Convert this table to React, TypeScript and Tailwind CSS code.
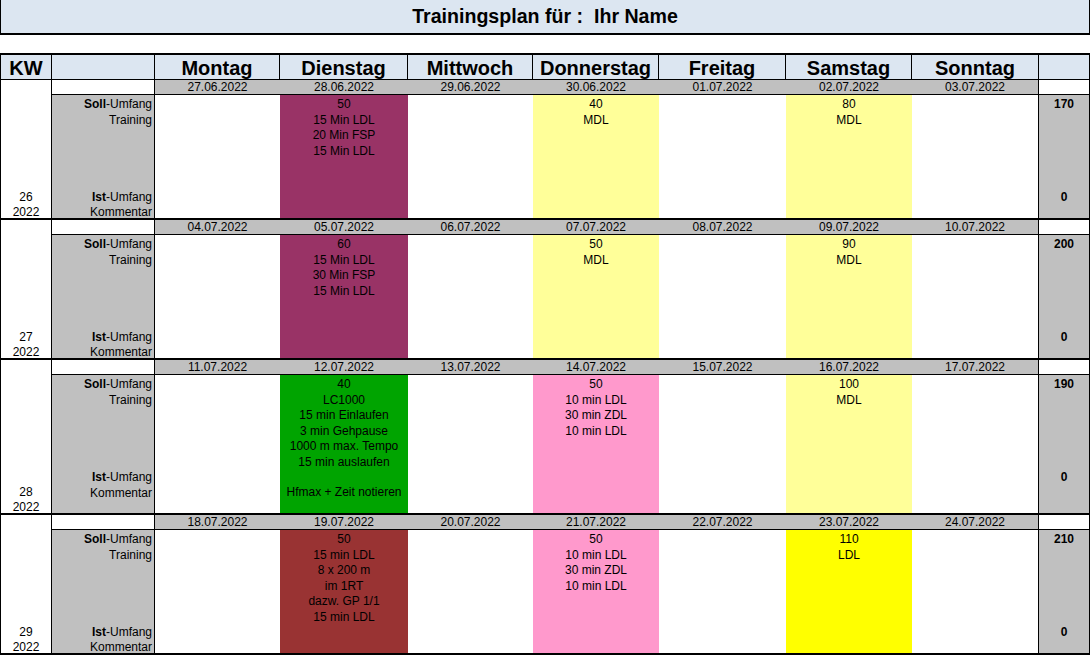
const font = { fontFamily: '"Liberation Sans", Arial, sans-serif' }

const dayNames = ['Montag', 'Dienstag', 'Mittwoch', 'Donnerstag', 'Freitag', 'Samstag', 'Sonntag']
const dayWidths = ['w-[125px]', 'w-[128px]', 'w-[125px]', 'w-[126px]', 'w-[127px]', 'w-[126px]', 'w-[127px]']

type Cell = { bg: string; lines: string[] } | null

type Week = {
  kw: string
  dates: string[]
  cells: Cell[]
  soll: string
  tall?: boolean
}

const weeks: Week[] = [
  {
    kw: '26',
    dates: ['27.06.2022', '28.06.2022', '29.06.2022', '30.06.2022', '01.07.2022', '02.07.2022', '03.07.2022'],
    cells: [
      null,
      { bg: 'bg-[#993366]', lines: ['50', '15 Min LDL', '20 Min FSP', '15 Min LDL'] },
      null,
      { bg: 'bg-[#ffff99]', lines: ['40', 'MDL'] },
      null,
      { bg: 'bg-[#ffff99]', lines: ['80', 'MDL'] },
      null,
    ],
    soll: '170',
  },
  {
    kw: '27',
    dates: ['04.07.2022', '05.07.2022', '06.07.2022', '07.07.2022', '08.07.2022', '09.07.2022', '10.07.2022'],
    cells: [
      null,
      { bg: 'bg-[#993366]', lines: ['60', '15 Min LDL', '30 Min FSP', '15 Min LDL'] },
      null,
      { bg: 'bg-[#ffff99]', lines: ['50', 'MDL'] },
      null,
      { bg: 'bg-[#ffff99]', lines: ['90', 'MDL'] },
      null,
    ],
    soll: '200',
  },
  {
    kw: '28',
    dates: ['11.07.2022', '12.07.2022', '13.07.2022', '14.07.2022', '15.07.2022', '16.07.2022', '17.07.2022'],
    cells: [
      null,
      {
        bg: 'bg-[#00a400]',
        lines: ['40', 'LC1000', '15 min Einlaufen', '3 min Gehpause', '1000 m max. Tempo', '15 min auslaufen', '', 'Hfmax + Zeit notieren'],
      },
      null,
      { bg: 'bg-[#ff99cc]', lines: ['50', '10 min LDL', '30 min ZDL', '10 min LDL'] },
      null,
      { bg: 'bg-[#ffff99]', lines: ['100', 'MDL'] },
      null,
    ],
    soll: '190',
    tall: true,
  },
  {
    kw: '29',
    dates: ['18.07.2022', '19.07.2022', '20.07.2022', '21.07.2022', '22.07.2022', '23.07.2022', '24.07.2022'],
    cells: [
      null,
      { bg: 'bg-[#993333]', lines: ['50', '15 min LDL', '8 x 200 m', 'im 1RT', 'dazw. GP 1/1', '15 min LDL'] },
      null,
      { bg: 'bg-[#ff99cc]', lines: ['50', '10 min LDL', '30 min ZDL', '10 min LDL'] },
      null,
      { bg: 'bg-[#ffff00]', lines: ['110', 'LDL'] },
      null,
    ],
    soll: '210',
  },
]

function WeekBlock({ week }: { week: Week }) {
  const bottom = week.tall ? 'pb-[12px]' : '-mb-[2.5px]'
  return (
    <div className="flex border-b-2 border-black">
      {/* KW */}
      <div className="w-[52px] border-l border-r border-black bg-white flex flex-col justify-end items-center text-[12px] leading-[15px]">
        <div className="-mb-[2px] text-center">
          <div>{week.kw}</div>
          <div>2022</div>
        </div>
      </div>

      <div className="flex flex-col">
        {/* Datumszeile */}
        <div className="flex h-[15px] border-b border-black text-[12px] leading-[15px]">
          <div className="w-[103px] border-r border-black bg-white" />
          {week.dates.map((d, i) => (
            <div key={d} className={`${dayWidths[i]} bg-[#c0c0c0] text-center ${i === 6 ? 'border-r border-black' : ''}`}>
              {d}
            </div>
          ))}
          <div className="w-[51px] border-r border-black bg-white" />
        </div>

        {/* Inhalt */}
        <div className={`flex ${week.tall ? 'h-[138px]' : 'h-[123px]'} text-[12px]`}>
          <div className="w-[103px] border-r border-black bg-[#c0c0c0] flex flex-col justify-between text-right pr-[2px] pt-[1px]">
            <div>
              <div className="leading-[16px] h-[17px]">
                <b>Soll</b>-Umfang
              </div>
              <div className="leading-[15.4px]">Training</div>
            </div>
            <div className={`leading-[15.4px] ${bottom}`}>
              <div>
                <b>Ist</b>-Umfang
              </div>
              <div>Kommentar</div>
            </div>
          </div>

          {week.cells.map((c, i) => (
            <div
              key={i}
              className={`${dayWidths[i]} ${c ? c.bg : 'bg-white'} text-center pt-[1px] ${i === 6 ? 'border-r border-black' : ''}`}
            >
              {c &&
                c.lines.map((l, j) => (
                  <div key={j} className={j === 0 ? 'leading-[16px] h-[17px]' : 'leading-[15.4px] h-[15.4px]'}>
                    {l}
                  </div>
                ))}
            </div>
          ))}

          <div className="w-[51px] border-r border-black bg-[#c0c0c0] flex flex-col justify-between items-center font-bold pt-[1px]">
            <div className="leading-[16px]">{week.soll}</div>
            <div className={`leading-[15.4px] text-center ${bottom}`}>
              <div>0</div>
              <div>&nbsp;</div>
            </div>
          </div>
        </div>
      </div>
    </div>
  )
}

export default function App() {
  return (
    <div className="w-[1092px] h-[658px] bg-white overflow-hidden text-black" style={font}>
      <div className="w-[1090px] h-[35px] bg-[#dce6f1] border-l border-r border-b-2 border-black flex items-center justify-center pt-[1px]">
        <span className="text-[19.6px] font-bold">Trainingsplan für :&nbsp; Ihr Name</span>
      </div>

      <div className="w-[1090px] mt-[18px]">
        {/* Kopfzeile */}
        <div className="flex h-[27px] border-t-2 border-b border-black bg-[#dce6f1] text-[20px] font-bold leading-[26px]">
          <div className="w-[52px] border-l border-r border-black text-center">KW</div>
          <div className="w-[103px] border-r border-black" />
          {dayNames.map((n, i) => (
            <div key={n} className={`${dayWidths[i]} border-r border-black text-center`}>
              {n}
            </div>
          ))}
          <div className="w-[51px] border-r border-black" />
        </div>

        {weeks.map((w) => (
          <WeekBlock key={w.kw} week={w} />
        ))}
      </div>
    </div>
  )
}
